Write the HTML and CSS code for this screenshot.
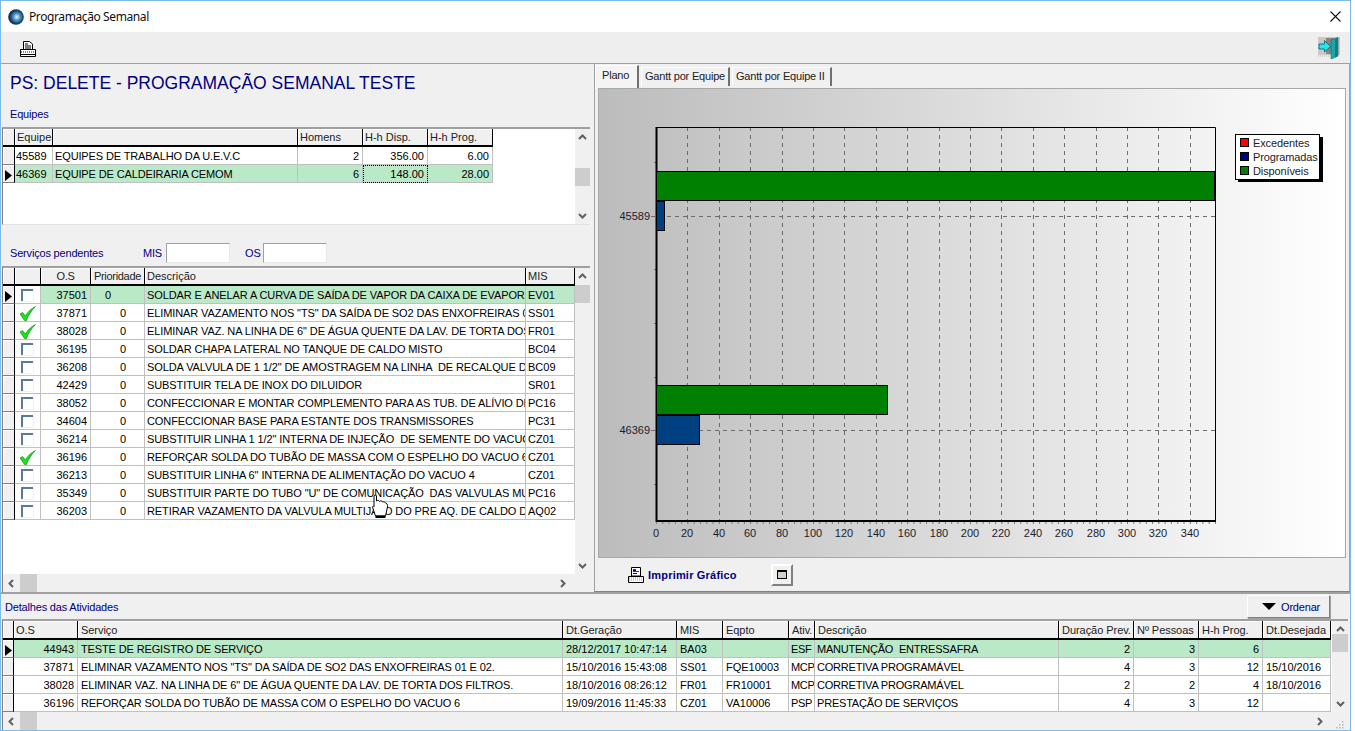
FILE: index.html
```html
<!DOCTYPE html>
<html lang="pt">
<head>
<meta charset="utf-8">
<title>Programação Semanal</title>
<link rel="stylesheet" href="styles.css">
</head>
<body>
<svg class="defs" width="0" height="0" aria-hidden="true">
  <defs>
    <symbol id="up" viewBox="0 0 9 6"><path d="M1 5 4.5 1.5 8 5" fill="none" stroke="#606060" stroke-width="2"/></symbol>
    <symbol id="down" viewBox="0 0 9 6"><path d="M1 1 4.5 4.5 8 1" fill="none" stroke="#606060" stroke-width="2"/></symbol>
    <symbol id="left" viewBox="0 0 6 9"><path d="M5 1 1.5 4.5 5 8" fill="none" stroke="#606060" stroke-width="2"/></symbol>
    <symbol id="right" viewBox="0 0 6 9"><path d="M1 1 4.5 4.5 1 8" fill="none" stroke="#606060" stroke-width="2"/></symbol>
    <symbol id="box" viewBox="0 0 13 13"><path d="M12.500 1V12.500H1" fill="none" stroke="#f2f2e6" stroke-width="1"/><path d="M1 12V1H12" fill="none" stroke="#5a78a4" stroke-width="2"/></symbol>
    <symbol id="tick" viewBox="0 0 17 15"><path d="M1 8 3.500 6.500 6.500 10C8.500 6 11.500 3 16.500 .5 12.500 4.500 9.500 9 7.500 14.500H5.500Z" fill="#12e812" stroke="#006000" stroke-width=".5"/></symbol>
    <symbol id="arrow" viewBox="0 0 7 11"><path d="M0 0 7 5.500 0 11Z" fill="#000"/></symbol>
  </defs>
</svg>
<div class="window">
  <header class="titlebar">
    <svg class="app-icon" viewBox="0 0 16 16"><defs><radialGradient id="orb" cx=".55" cy=".5" r=".55"><stop offset="0" stop-color="#f4fbff"/><stop offset=".4" stop-color="#4d93c8"/><stop offset=".8" stop-color="#12365f"/><stop offset="1" stop-color="#1b2a3c"/></radialGradient></defs><circle cx="8" cy="8" r="7.800" fill="url(#orb)"/></svg>
    <span class="title">Programação Semanal</span>
    <svg class="close" viewBox="0 0 11 11"><path d="M.5.5 10.500 10.500M10.500.5.5 10.500" stroke="#111" stroke-width="1.100" fill="none"/></svg>
  </header>
  <div class="toolbar">
    <svg class="tool-print" viewBox="0 0 16 16"><path d="M3.500.5H9.500L12.500 3V8.500H3.500Z" fill="#fff" stroke="#000"/><path d="M5 3H8M5 5H11M5 7H11" stroke="#000"/><path d="M.5 8.500H15.500V15.500H.5Z" fill="#fff" stroke="#000"/><path d="M1 10.500H15M1 11.500H15" stroke="#888" stroke-dasharray="1 1"/><path d="M1 13.500H15" stroke="#000"/></svg>
    <svg class="tool-exit" viewBox="0 0 22 22"><path d="M0 0H22V18H0Z" fill="#c8c8c8"/><path d="M8 1H16V17H8Z" fill="#858585"/><path d="M13 3 20 .5V19L13 22Z" fill="#1aa8ac" stroke="#0d6d70" stroke-width=".6"/><path d="M17 1.500 20 .5V19L17 20.500Z" fill="#0d7e86"/><path d="M1 7H6.500V3.500L12.500 9.500 6.500 15V12H1Z" fill="#24e8f0" stroke="#075b60" stroke-width=".8"/><path d="M0 19H12" stroke="#bbb" stroke-dasharray="1 1"/></svg>
  </div>
  <main class="main">
    <section class="left">
      <h1 class="heading">PS: DELETE - PROGRAMAÇÃO SEMANAL TESTE</h1>
      <div class="label label-equipes">Equipes</div>
      <div class="frame frame-teams">
        <div class="grid-body">
          <div class="pane">
            <table class="grid teams">
              <colgroup><col class="w12"><col class="w38"><col class="w245"><col class="w65"><col class="w65"><col class="w65"></colgroup>
              <thead><tr><th class="ind"></th><th>Equipe</th><th></th><th>Homens</th><th>H-h Disp.</th><th>H-h Prog.</th></tr></thead>
              <tbody>
                <tr><td class="ind"></td><td class="pad-r1">45589</td><td class="indent">EQUIPES DE TRABALHO DA U.E.V.C</td><td class="num">2</td><td class="num">356.00</td><td class="num">6.00</td></tr>
                <tr class="sel"><td class="ind"><svg class="arrow"><use href="#arrow"/></svg></td><td class="pad-r1">46369</td><td class="indent">EQUIPE DE CALDEIRARIA CEMOM</td><td class="num">6</td><td class="num focus">148.00</td><td class="num">28.00</td></tr>
              </tbody>
            </table>
          </div>
          <div class="vscroll">
            <svg class="chev-v"><use href="#up"/></svg>
            <div class="thumb-v thumb-teams"></div>
            <svg class="chev-v chev-end"><use href="#down"/></svg>
          </div>
        </div>
      </div>
      <div class="filters">
        <span class="label lbl-serv">Serviços pendentes</span>
        <span class="label lbl-mis">MIS</span><span class="input"></span>
        <span class="label lbl-os">OS</span><span class="input"></span>
      </div>
      <div class="frame frame-serv">
        <div class="grid-body">
          <div class="pane">
            <table class="grid serv">
              <colgroup><col class="w12"><col class="w26"><col class="w50"><col class="w54"><col class="w381"><col class="w49"></colgroup>
              <thead><tr><th class="ind"></th><th></th><th class="ctr">O.S</th><th class="ctr">Prioridade</th><th>Descrição</th><th>MIS</th></tr></thead>
              <tbody>
                <tr class="sel"><td class="ind"><svg class="arrow"><use href="#arrow"/></svg></td><td class="chk"><svg class="box"><use href="#box"/></svg></td><td class="num">37501</td><td class="prio first">0</td><td>SOLDAR E ANELAR A CURVA DE SAÍDA DE VAPOR DA CAIXA DE EVAPORAÇÃO</td><td>EV01</td></tr>
                <tr><td class="ind"></td><td class="chk"><svg class="tick"><use href="#tick"/></svg></td><td class="num">37871</td><td class="prio">0</td><td>ELIMINAR VAZAMENTO NOS "TS" DA SAÍDA DE SO2 DAS ENXOFREIRAS 01 E 02.</td><td>SS01</td></tr>
                <tr><td class="ind"></td><td class="chk"><svg class="tick"><use href="#tick"/></svg></td><td class="num">38028</td><td class="prio">0</td><td>ELIMINAR VAZ. NA LINHA DE 6" DE ÁGUA QUENTE DA LAV. DE TORTA DOS FILTROS.</td><td>FR01</td></tr>
                <tr><td class="ind"></td><td class="chk"><svg class="box"><use href="#box"/></svg></td><td class="num">36195</td><td class="prio">0</td><td>SOLDAR CHAPA LATERAL NO TANQUE DE CALDO MISTO</td><td>BC04</td></tr>
                <tr><td class="ind"></td><td class="chk"><svg class="box"><use href="#box"/></svg></td><td class="num">36208</td><td class="prio">0</td><td>SOLDA VALVULA DE 1 1/2" DE AMOSTRAGEM NA LINHA  DE RECALQUE DO CALDO</td><td>BC09</td></tr>
                <tr><td class="ind"></td><td class="chk"><svg class="box"><use href="#box"/></svg></td><td class="num">42429</td><td class="prio">0</td><td>SUBSTITUIR TELA DE INOX DO DILUIDOR</td><td>SR01</td></tr>
                <tr><td class="ind"></td><td class="chk"><svg class="box"><use href="#box"/></svg></td><td class="num">38052</td><td class="prio">0</td><td>CONFECCIONAR E MONTAR COMPLEMENTO PARA AS TUB. DE ALÍVIO DE PRESSÃO</td><td>PC16</td></tr>
                <tr><td class="ind"></td><td class="chk"><svg class="box"><use href="#box"/></svg></td><td class="num">34604</td><td class="prio">0</td><td>CONFECCIONAR BASE PARA ESTANTE DOS TRANSMISSORES</td><td>PC31</td></tr>
                <tr><td class="ind"></td><td class="chk"><svg class="box"><use href="#box"/></svg></td><td class="num">36214</td><td class="prio">0</td><td>SUBSTITUIR LINHA 1 1/2" INTERNA DE INJEÇÃO  DE SEMENTE DO VACUO 4</td><td>CZ01</td></tr>
                <tr><td class="ind"></td><td class="chk"><svg class="tick"><use href="#tick"/></svg></td><td class="num">36196</td><td class="prio">0</td><td>REFORÇAR SOLDA DO TUBÃO DE MASSA COM O ESPELHO DO VACUO 6</td><td>CZ01</td></tr>
                <tr><td class="ind"></td><td class="chk"><svg class="box"><use href="#box"/></svg></td><td class="num">36213</td><td class="prio">0</td><td>SUBSTITUIR LINHA 6" INTERNA DE ALIMENTAÇÃO DO VACUO 4</td><td>CZ01</td></tr>
                <tr><td class="ind"></td><td class="chk"><svg class="box"><use href="#box"/></svg></td><td class="num">35349</td><td class="prio">0</td><td>SUBSTITUIR PARTE DO TUBO "U" DE COMUNICAÇÃO  DAS VALVULAS MULTIJATO</td><td>PC16</td></tr>
                <tr><td class="ind"></td><td class="chk"><svg class="box"><use href="#box"/></svg></td><td class="num">36203</td><td class="prio">0</td><td>RETIRAR VAZAMENTO DA VALVULA MULTIJATO DO PRE AQ. DE CALDO DE 2º EFEITO</td><td>AQ02</td></tr>
              </tbody>
            </table>
          </div>
          <div class="vscroll">
            <svg class="chev-v"><use href="#up"/></svg>
            <div class="thumb-v thumb-serv"></div>
            <svg class="chev-v chev-end"><use href="#down"/></svg>
          </div>
        </div>
        <div class="hscroll hscroll-serv">
          <svg class="chev-h"><use href="#left"/></svg>
          <div class="thumb-h"></div>
          <svg class="chev-h chev-end-h"><use href="#right"/></svg>
        </div>
      </div>
      <svg class="hand" viewBox="0 0 16 25"><path d="M2 2C2 .8 4.500 .8 4.500 2V7C5.500 6 7 6 7.500 7.500 8.500 6.500 10 6.500 10.500 8 11.500 7.500 13.500 8 14 9.500 15.500 9.500 15.800 11 15.500 13L13.500 22H3.500L.8 14C.2 12 1.500 11.500 2 12.500Z" fill="#fff" stroke="#000"/><path d="M3.500 21.500H13.500V24H3.500Z" fill="#000"/></svg>
    </section>
    <section class="right">
      <nav class="tabs">
        <span class="tab active">Plano</span>
        <span class="tab t-gantt">Gantt por Equipe</span>
        <span class="tab t-gantt2">Gantt por Equipe II</span>
      </nav>
      <div class="page">
        <svg class="chart" viewBox="599 89 746 468">
          <defs><linearGradient id="bg"><stop offset="0" stop-color="#bcbcbc"/><stop offset="1" stop-color="#fff"/></linearGradient></defs>
          <rect x="599" y="89" width="746" height="468" fill="url(#bg)"/>
          <path class="gridline" d="M687.500 127V524M719.500 127V524M750.500 127V524M782.500 127V524M813.500 127V524M844.500 127V524M876.500 127V524M907.500 127V524M939.500 127V524M970.500 127V524M1001.500 127V524M1033.500 127V524M1064.500 127V524M1096.500 127V524M1127.500 127V524M1158.500 127V524M1190.500 127V524"/>
          <path class="gridline" d="M1215 216.500H651M1215 430.500H651"/>
          <line class="minor" x1="656" y1="522.500" x2="1216" y2="522.500"/>
          <path class="ytick" d="M654 162.500H656M654 269.500H656M654 323.500H656M654 377.500H656M654 484.500H656"/>
          <path class="frame-thin" d="M656 127.500H1215.500V520"/>
          <path class="frame-thick" d="M656.500 127V521H1216"/>
          <rect class="bar-g" x="656.500" y="171.500" width="558.500" height="29"/>
          <path class="bar-edge" d="M1215 171V201"/>
          <rect class="bar-b" x="656.500" y="201.500" width="8" height="29"/>
          <rect class="bar-g" x="656.500" y="385.500" width="231" height="29"/>
          <rect class="bar-b" x="656.500" y="415.500" width="43" height="29"/>
          <text class="ax end" x="650" y="220">45589</text>
          <text class="ax end" x="650" y="434">46369</text>
          <g class="ax mid">
            <text x="656" y="537">0</text><text x="687" y="537">20</text><text x="719" y="537">40</text><text x="750" y="537">60</text><text x="782" y="537">80</text><text x="813" y="537">100</text><text x="844" y="537">120</text><text x="876" y="537">140</text><text x="907" y="537">160</text><text x="939" y="537">180</text><text x="970" y="537">200</text><text x="1001" y="537">220</text><text x="1033" y="537">240</text><text x="1064" y="537">260</text><text x="1096" y="537">280</text><text x="1127" y="537">300</text><text x="1158" y="537">320</text><text x="1190" y="537">340</text>
          </g>
          <rect x="1238" y="137" width="85" height="45" fill="#000"/>
          <rect class="legend" x="1235.500" y="134.500" width="84" height="45"/>
          <rect class="sw" x="1240.500" y="138.500" width="8" height="8" fill="#f00"/>
          <rect class="sw" x="1240.500" y="152.500" width="8" height="8" fill="#000080"/>
          <rect class="sw" x="1240.500" y="166.500" width="8" height="8" fill="#008000"/>
          <text class="ax leg" x="1253" y="147">Excedentes</text>
          <text class="ax leg" x="1253" y="161">Programadas</text>
          <text class="ax leg" x="1253" y="175">Disponíveis</text>
        </svg>
      </div>
      <div class="print-row">
        <svg class="print-icon" viewBox="0 0 16 16"><path d="M3.500.5H12.500V9H3.500Z" fill="#fff" stroke="#000"/><path d="M5 2.500H8M5 4.500H11" stroke="#d00000"/><path d="M5 3.500H8M5 6.500H9" stroke="#000090"/><path d="M.5 9.500H15.500V15.500H.5Z" fill="#fff" stroke="#000"/><path d="M1 11H15M1 13H15" stroke="#999" stroke-dasharray="1 1"/></svg>
        <span class="print-text">Imprimir Gráfico</span>
        <span class="mini-btn"><span class="mini-in"></span></span>
      </div>
    </section>
  </main>
  <section class="details">
    <div class="details-head">
      <span class="label">Detalhes das Atividades</span>
      <span class="btn-order"><span class="tri"></span><span class="label">Ordenar</span></span>
    </div>
    <div class="frame frame-det">
      <div class="grid-body">
        <div class="pane">
          <table class="grid det">
            <colgroup><col class="w11"><col class="w64"><col class="w485"><col class="w114"><col class="w46"><col class="w66"><col class="w26"><col class="w244"><col class="w75"><col class="w65"><col class="w64"><col class="w68"></colgroup>
            <thead><tr><th class="ind"></th><th>O.S</th><th>Serviço</th><th>Dt.Geração</th><th>MIS</th><th>Eqpto</th><th>Ativ.</th><th>Descrição</th><th>Duração Prev.</th><th>Nº Pessoas</th><th>H-h Prog.</th><th>Dt.Desejada</th></tr></thead>
            <tbody>
              <tr class="sel"><td class="ind"><svg class="arrow"><use href="#arrow"/></svg></td><td class="num">44943</td><td>TESTE DE REGISTRO DE SERVIÇO</td><td>28/12/2017 10:47:14</td><td>BA03</td><td></td><td>ESF</td><td>MANUTENÇÃO  ENTRESSAFRA</td><td class="num">2</td><td class="num">3</td><td class="num">6</td><td></td></tr>
              <tr><td class="ind"></td><td class="num">37871</td><td>ELIMINAR VAZAMENTO NOS "TS" DA SAÍDA DE SO2 DAS ENXOFREIRAS 01 E 02.</td><td>15/10/2016 15:43:08</td><td>SS01</td><td>FQE10003</td><td>MCP</td><td>CORRETIVA PROGRAMÁVEL</td><td class="num">4</td><td class="num">3</td><td class="num">12</td><td>15/10/2016</td></tr>
              <tr><td class="ind"></td><td class="num">38028</td><td>ELIMINAR VAZ. NA LINHA DE 6" DE ÁGUA QUENTE DA LAV. DE TORTA DOS FILTROS.</td><td>18/10/2016 08:26:12</td><td>FR01</td><td>FR10001</td><td>MCP</td><td>CORRETIVA PROGRAMÁVEL</td><td class="num">2</td><td class="num">2</td><td class="num">4</td><td>18/10/2016</td></tr>
              <tr><td class="ind"></td><td class="num">36196</td><td>REFORÇAR SOLDA DO TUBÃO DE MASSA COM O ESPELHO DO VACUO 6</td><td>19/09/2016 11:45:33</td><td>CZ01</td><td>VA10006</td><td>PSP</td><td>PRESTAÇÃO DE SERVIÇOS</td><td class="num">4</td><td class="num">3</td><td class="num">12</td><td></td></tr>
            </tbody>
          </table>
        </div>
        <div class="vscroll vscroll-det">
          <svg class="chev-v"><use href="#up"/></svg>
          <div class="thumb-v thumb-det"></div>
          <svg class="chev-v chev-end"><use href="#down"/></svg>
        </div>
      </div>
      <div class="hscroll hscroll-det">
        <svg class="chev-h"><use href="#left"/></svg>
        <div class="thumb-h"></div>
        <svg class="chev-h chev-end-h"><use href="#right"/></svg>
        <svg class="grip" viewBox="0 0 9 9"><path d="M7 1h1.500v1.500H7ZM4 4h1.500v1.500H4ZM7 4h1.500v1.500H7ZM1 7h1.500v1.500H1ZM4 7h1.500v1.500H4ZM7 7h1.500v1.500H7Z" fill="#b8b8b8"/></svg>
      </div>
    </div>
  </section>
</div>
</body>
</html>
```
FILE: styles.css
```css
* { box-sizing: border-box; }
html, body { margin: 0; padding: 0; background: #fff; overflow: hidden; }
body { width: 1355px; height: 731px; font-family: "Liberation Sans", Arial, sans-serif; font-size: 11px; color: #000; }
.defs { position: absolute; }

.window { width: 1351px; height: 731px; border: 1px solid #7fbbe9; border-bottom: 0; display: flex; flex-direction: column; background: #f0f0f0; box-shadow: inset 0 -1px 0 #7fbbe9; }

.titlebar { height: 31px; background: #fff; display: flex; align-items: center; padding: 0 10px 0 7px; flex: none; }
.app-icon { width: 16px; height: 16px; margin-right: 5px; }
.title { font-family: "Noto Sans", sans-serif; font-size: 12px; color: #111; flex: 1; letter-spacing: -.4px; }
.close { width: 11px; height: 11px; margin-right: -1px; }

.toolbar { height: 32px; flex: none; display: flex; justify-content: space-between; align-items: flex-start; background: #eeeeee; border-bottom: 1px solid #a0a0a0; padding: 9px 10px 0 19px; }
.tool-print { width: 16px; height: 16px; }
.tool-exit { width: 22px; height: 22px; margin-top: -4px; }

.main { height: 528px; flex: none; display: flex; border-bottom: 0; }
.left { width: 591px; flex: none; padding-left: 1px; }
.heading { margin: 0; height: 40px; padding: 9px 0 0 8px; font-size: 17.500px; line-height: 20px; font-weight: 400; color: #000080; white-space: nowrap; }
.label { color: #000080; font-size: 11px; white-space: nowrap; letter-spacing: -.18px; }
.label-equipes { height: 23px; padding: 4px 0 0 8px; line-height: 12px; }

.frame { width: 588px; border-top: 2px solid #a0a0a0; border-left: 1px solid #808080; display: flex; flex-direction: column; }
.frame-teams { height: 98px; border-bottom: 1px solid #e2e2e2; }
.frame-serv { height: 326px; }
.frame-det { width: 1346px; height: 111px; }
.grid-body { flex: 1; min-height: 0; display: flex; }
.pane { flex: 1; min-width: 0; background: #fff; overflow: hidden; }

.grid { border-collapse: separate; border-spacing: 0; table-layout: fixed; font-size: 11px; }
.teams { width: 490px; }
.serv { width: 572px; }
.det { width: 1328px; }
.w11 { width: 11px; } .w12 { width: 12px; } .w26 { width: 26px; } .w38 { width: 38px; } .w46 { width: 46px; } .w49 { width: 49px; } .w50 { width: 50px; } .w54 { width: 54px; } .w64 { width: 64px; } .w65 { width: 65px; } .w66 { width: 66px; } .w68 { width: 68px; } .w75 { width: 75px; } .w114 { width: 114px; } .w244 { width: 244px; } .w245 { width: 245px; } .w381 { width: 381px; } .w485 { width: 485px; }

.grid th { height: 18px; padding: 0 2px; font-weight: 400; text-align: left; background: #f0f0f0; border-right: 1px solid #000; border-bottom: 2px solid #000; box-shadow: inset 1px 1px 0 #fff; color: #222; white-space: nowrap; overflow: hidden; line-height: 15px; }
.grid th.ctr { text-align: center; letter-spacing: -.3px; }
.teams th { padding-top: 1px; }
.det th { height: 19px; padding-top: 2px; padding-left: 3px; letter-spacing: -.05px; }
.grid.det th:nth-child(2) { padding-left: 2px; }
.grid td { height: 18px; padding: 0 2px; border-right: 1px solid #c0c0c0; border-bottom: 1px solid #c0c0c0; white-space: pre; overflow: hidden; line-height: 16px; }
.det td { padding-left: 3px; }
.teams td:nth-child(3), .det td:nth-child(3) { letter-spacing: -.13px; }
.serv td:nth-child(5) { letter-spacing: -.1px; }
.grid.det td:nth-child(7) { padding: 0 0 0 2px; letter-spacing: -.35px; }
.grid.det td:nth-child(8) { letter-spacing: -.2px; padding-left: 2px; }
.grid td.ind { padding: 0; background: #f0f0f0; border-right: 1px solid #000; border-bottom: 1px solid #808080; box-shadow: inset 1px 1px 0 #fff; }
.grid td.num { text-align: right; padding-right: 3px; }
.grid td.pad-r1 { padding-left: 1px; }
.indent { padding-left: 2px; }
.sel td:not(.ind):not(.chk) { background: #bae9c8; }
.focus { outline: 1px dotted #000; outline-offset: -1px; }
.arrow { display: block; width: 7px; height: 11px; margin: 3px 0 0 2px; }
.grid td.chk { padding: 0; background: #fff; }
.box { display: block; width: 13px; height: 13px; margin: 2px 0 0 6px; }
.tick { display: block; width: 17px; height: 15px; margin: 1px 0 0 4px; }
.grid td.prio { text-align: right; padding-right: 18px; }
.grid td.prio.first { padding-right: 33px; }

.vscroll { width: 15px; flex: none; background: #f0f0f0; display: flex; flex-direction: column; align-items: center; padding: 5px 0; }
.vscroll-det { width: 16px; }
.chev-v { width: 9px; height: 6px; flex: none; }
.chev-end { margin-top: auto; }
.thumb-v { width: 100%; height: 18px; flex: none; background: #cdcdcd; }
.thumb-teams { margin-top: 28px; }
.thumb-serv { margin-top: 6px; }
.thumb-det { margin-top: 2px; }

.hscroll { height: 18px; flex: none; background: #f0f0f0; display: flex; align-items: center; padding-left: 5px; }
.chev-h { width: 6px; height: 9px; flex: none; }
.thumb-h { width: 17px; height: 100%; margin-left: 6px; background: #cdcdcd; }
.chev-end-h { margin-left: 523px; }
.hscroll-det .chev-end-h { margin-left: 1280px; }
.grip { width: 9px; height: 9px; margin: 6px 0 0 12px; }

.filters { height: 41px; display: flex; align-items: flex-start; padding-top: 18px; }
.filters .label { line-height: 20px; }
.lbl-serv { margin-left: 8px; width: 133px; }
.lbl-mis { width: 23px; }
.lbl-os { margin-left: 15px; width: 18px; }
.input { width: 64px; height: 20px; background: #fff; border: 1px solid; border-color: #a0a0a0 #e8e8e8 #e8e8e8 #a0a0a0; }

.hand { position: absolute; left: 372px; top: 494px; width: 16px; height: 25px; }

.right { flex: 1; min-width: 0; margin-left: 2px; border-left: 1px solid #a0a0a0; border-right: 1px solid #a0a0a0; border-bottom: 1px solid #808080; display: flex; flex-direction: column; }
.tabs { height: 24px; flex: none; display: flex; align-items: flex-start; border-top: 0; }
.tab { height: 19px; margin: 3px 0 0 2px; padding: 0 0 0 3px; line-height: 17px; font-size: 11px; letter-spacing: -.2px; color: #222; background: #f0f0f0; border-top: 1px solid #fff; border-left: 1px solid #fff; border-right: 2px solid #707070; white-space: nowrap; overflow: hidden; }
.tab.active { height: 24px; margin: 1px 0 0 0; width: 44px; padding: 1px 0 0 6px; background: #f4f4f4; border-right: 2px solid #707070; }
.t-gantt { width: 89px; }
.t-gantt2 { width: 100px; }
.page { margin-left: 3px; width: 748px; height: 470px; flex: none; border: 1px solid #a8a8a8; }
.chart { display: block; width: 746px; height: 468px; }
.gridline { fill: none; stroke: #6c6c6c; stroke-dasharray: 4 4; }
.minor { stroke: #7c7c7c; stroke-width: 3; stroke-dasharray: 1 5.280; }
.ytick { stroke: #777; fill: none; }
.frame-thin { fill: none; stroke: #000; }
.frame-thick { fill: none; stroke: #000; stroke-width: 2; }
.bar-g { fill: #008000; stroke: #000; }
.bar-b { fill: #004080; stroke: #000; }
.bar-edge { stroke: #000; stroke-width: 2; }
.ax { font-family: "Liberation Sans", Arial, sans-serif; font-size: 11px; fill: #1c1c2c; }
.leg { letter-spacing: -.12px; }
.end { text-anchor: end; }
.mid { text-anchor: middle; }
.legend { fill: #fff; stroke: #000; }
.sw { stroke: #000; }

.print-row { flex: 1; display: flex; align-items: center; padding-left: 33px; }
.print-icon { width: 16px; height: 16px; flex: none; }
.print-text { width: 88px; margin-left: 4px; font-weight: 700; color: #000080; font-size: 11px; letter-spacing: .2px; white-space: nowrap; }
.mini-btn { width: 22px; height: 22px; margin-left: 35px; display: flex; align-items: center; justify-content: center; background: #f0f0f0; border: 2px solid; border-color: #fff #808080 #808080 #fff; }
.mini-in { width: 10px; height: 9px; background: #d4d0c8; border: 1px solid #000; border-top-width: 2px; }

.details { flex: 1; border-top: 2px solid #a0a0a0; padding-left: 1px; }
.details-head { height: 25px; display: flex; align-items: flex-start; justify-content: space-between; padding: 6px 20px 0 3px; }
.details-head > .label { line-height: 12px; padding-top: 1px; }
.btn-order { width: 83px; height: 23px; margin-top: -5px; display: flex; align-items: center; padding-left: 14px; background: #f0f0f0; border: 1px solid; border-color: #fff #808080 #808080 #fff; box-shadow: 1px 1px 0 #a0a0a0; }
.tri { width: 0; height: 0; margin-right: 5px; border-left: 7px solid transparent; border-right: 7px solid transparent; border-top: 7px solid #000; }
```
